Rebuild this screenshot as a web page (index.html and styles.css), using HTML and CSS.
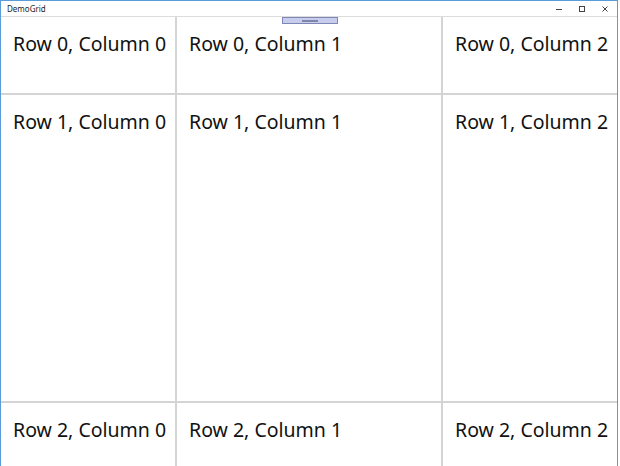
FILE: index.html
```html
<!DOCTYPE html>
<html>
<head>
<meta charset="utf-8">
<title>DemoGrid</title>
<link rel="stylesheet" href="styles.css">
</head>
<body>
<div class="window">
  <div class="titlebar">
    <span class="title">DemoGrid</span>
    <div class="controls">
      <svg class="ctl" width="10" height="10" viewBox="0 0 10 10"><path d="M2 5.5H8" stroke="#444" stroke-width="1"/></svg>
      <svg class="ctl" width="10" height="10" viewBox="0 0 10 10"><rect x="2.5" y="2.5" width="5" height="5" fill="none" stroke="#444" stroke-width="1"/></svg>
      <svg class="ctl" width="10" height="10" viewBox="0 0 10 10"><path d="M2.5 2.5L7.5 7.5M7.5 2.5L2.5 7.5" stroke="#444" stroke-width="1"/></svg>
    </div>
  </div>
  <div class="content">
    <div class="handle"><span class="dash"></span></div>
    <div class="grid">
      <div class="cell">Row 0, Column 0</div>
      <div class="cell">Row 0, Column 1</div>
      <div class="cell">Row 0, Column 2</div>
      <div class="cell">Row 1, Column 0</div>
      <div class="cell">Row 1, Column 1</div>
      <div class="cell">Row 1, Column 2</div>
      <div class="cell">Row 2, Column 0</div>
      <div class="cell">Row 2, Column 1</div>
      <div class="cell">Row 2, Column 2</div>
    </div>
  </div>
</div>
</body>
</html>
```

FILE: styles.css
```css
html, body {
  margin: 0;
  padding: 0;
  background: #ffffff;
  overflow: hidden;
}

.window {
  width: 618px;
  height: 466px;
  box-sizing: border-box;
  border: 1px solid #5b9bd8;
  border-bottom: none;
  display: flex;
  flex-direction: column;
  background: #ffffff;
  overflow: hidden;
}

.titlebar {
  height: 15px;
  flex: none;
  border-bottom: 1px solid #dcdcdc;
  display: flex;
  align-items: center;
  justify-content: space-between;
  padding-left: 6px;
}

.title {
  font-family: "Noto Sans", "Liberation Sans", sans-serif;
  font-size: 8px;
  color: #222;
}

.controls {
  display: flex;
  gap: 13px;
  padding-right: 7px;
}

.ctl {
  display: block;
}

.content {
  position: relative;
  flex: 1;
  min-height: 0;
}

.handle {
  position: absolute;
  left: 281px;
  top: 0;
  width: 54px;
  height: 5px;
  background: #c8cdee;
  border: 1px solid #7f87b6;
  display: flex;
  align-items: center;
  justify-content: center;
}

.dash {
  display: block;
  width: 16px;
  height: 2px;
  background: #7f86ab;
}

.grid {
  display: grid;
  grid-template-columns: 174px 264px 174px;
  grid-template-rows: 76px 306px 76px;
  gap: 2px;
  background: #d4d4d4;
}

.cell {
  background: #ffffff;
  padding: 13px 0 0 12px;
  font-family: "Noto Sans", "Open Sans", sans-serif;
  font-size: 19.5px;
  color: #111;
  white-space: nowrap;
}
```
